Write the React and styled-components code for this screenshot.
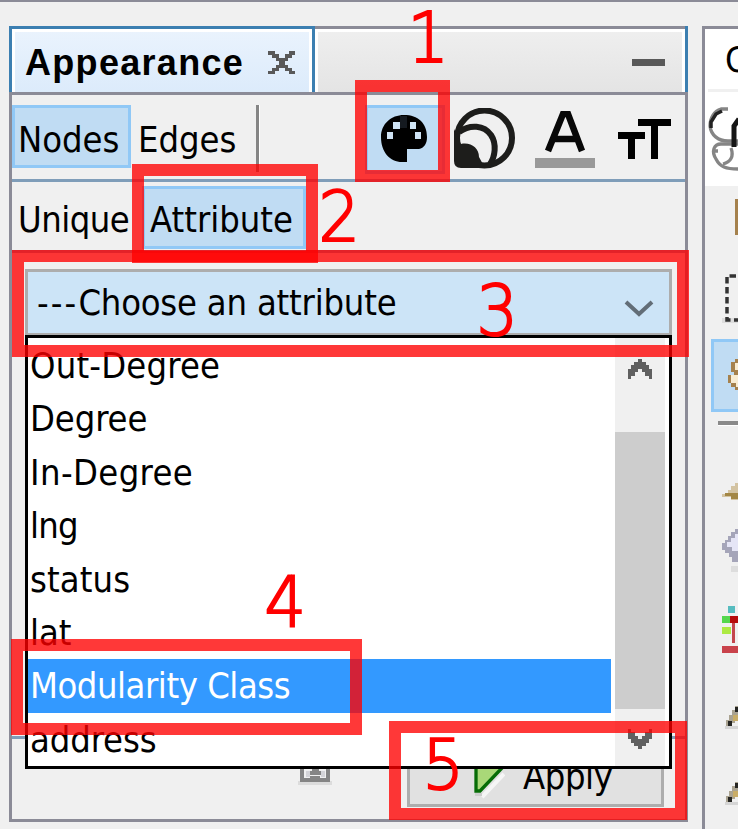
import React from 'react';
import styled, { createGlobalStyle, css } from 'styled-components';

const GlobalStyle = createGlobalStyle`
  html, body { margin: 0; padding: 0; overflow: hidden; background: #f0f0f0; }
  *, *::before, *::after { box-sizing: border-box; }
  svg { display: block; flex: none; }
`;

const Window = styled.div`
  position: relative;
  display: flex;
  gap: 14px;
  width: 738px;
  height: 829px;
  padding: 24px 0 0 9px;
  overflow: hidden;
  border-top: 2px solid #8b8b97;
  background: #f0f0f0;
  color: #000;
  font-family: 'DejaVu Sans Condensed', 'DejaVu Sans', sans-serif;
  font-stretch: condensed;
  font-size: 36px;
  line-height: 44px;
  white-space: nowrap;
`;

const Panel = styled.section`
  position: relative;
  flex: none;
  display: flex;
  flex-direction: column;
  width: 679px;
  height: 796px;
`;

const TitleBar = styled.header`
  display: flex;
  height: 66px;
  border-right: 3px solid #3c7fb1;
`;

const Tab = styled.div`
  display: flex;
  align-items: center;
  width: 306px;
  border: 3px solid #3c7fb1;
  border-bottom: 0;
  padding: 5px 0 0 13px;
  background: linear-gradient(#eaf3fd, #dcebfb);
  box-shadow: inset 3px 3px #fff, inset -3px 0 #fff;
`;

const TabTitle = styled.span`
  width: 243px;
  font: bold 36px/44px 'Liberation Sans', Arial, sans-serif;
  letter-spacing: 1.3px;
`;

const TitleFill = styled.div`
  flex: 1;
  display: flex;
  justify-content: flex-end;
  border-top: 3px solid #8b8b97;
  padding: 30px 20px 0 0;
  background: linear-gradient(#efefef, #e4e4e4);
  box-shadow: inset 3px 3px #fff, inset -3px 0 #fff;
`;

const Minimize = styled.span`
  width: 33px;
  height: 7px;
  background: #595959;
`;

const Body = styled.div`
  flex: 1;
  display: flex;
  flex-direction: column;
  border: 3px solid #8b8b97;
`;

const Toolbar = styled.div`
  display: flex;
  flex: none;
  height: ${p => p.$height}px;
  padding-top: ${p => p.$top}px;
  border-bottom: 3px solid #7f9db9;
`;

const Toggle = styled.div`
  flex: none;
  width: ${p => p.$width}px;
  height: ${p => p.$height || 63}px;
  padding: ${p => p.$pad};
  letter-spacing: ${p => p.$spacing || 0}px;
  border: 3px solid transparent;
  ${p => p.$active && css`
    border-color: #90c8f6;
    background: #c0dcf3;
  `}
`;

const Divider = styled.span`
  width: 4px;
  height: 67px;
  margin-right: 105px;
  border-left: 3px solid #858585;
  border-right: 1px solid #fff;
`;

const IconSlot = styled.div`
  width: ${p => p.$width}px;
  padding-top: ${p => p.$top}px;
`;

const ComboArea = styled.div`
  flex: 1;
  padding: 16px 0 0 13px;
  border-bottom: 3px solid #7f9db9;
`;

const Combo = styled.div`
  display: flex;
  justify-content: space-between;
  width: 647px;
  height: 67px;
  padding: 9px 15px 0 9px;
  border: 3px solid #adadad;
  background: #cce4f7;
`;

const ComboText = styled.span`
  letter-spacing: -0.2px;
`;

const Dashes = styled.span`
  letter-spacing: 2.1px;
`;

const Footer = styled.div`
  display: flex;
  height: 80px;
  padding: 4px 21px 0 286px;
  justify-content: space-between;
`;

const ApplyButton = styled.div`
  display: flex;
  width: 257px;
  height: 64px;
  padding: 5px 0 0 64px;
  border: 3px solid #adadad;
  background: #e1e1e1;
`;

const ApplyLabel = styled.span`
  padding-top: 4px;
  margin-left: 18px;
  letter-spacing: -0.4px;
`;

const Popup = styled.div`
  position: absolute;
  left: 25px;
  top: 333px;
  display: flex;
  width: 647px;
  height: 434px;
  border: 3px solid #000;
  background: #fff;
`;

const Options = styled.div`
  width: 583px;
  margin-right: 4px;
  padding-top: 1px;
`;

const Option = styled.div`
  height: 53.4px;
  padding: 5px 0 0 2px;
  letter-spacing: ${p => p.$spacing}px;
  background: ${p => (p.$selected ? '#3399ff' : 'transparent')};
  color: ${p => (p.$selected ? '#fff' : '#000')};
`;

const Scrollbar = styled.div`
  display: flex;
  flex-direction: column;
  align-items: center;
  width: 50px;
  padding-top: 21px;
  background: #f0f0f0;
`;

const Thumb = styled.div`
  flex: none;
  width: 50px;
  height: 277px;
  margin: 53px 0 20px;
  background: #cdcdcd;
`;

const SidePanel = styled.aside`
  flex: none;
  width: 60px;
  height: 820px;
  border: 3px solid #8b8b97;
`;

const SideTop = styled.div`
  height: 157px;
  background: #fff;
`;

const SideTitle = styled.div`
  height: 63px;
  padding: 9px 0 0 17px;
  margin-left: 3px;
  border-bottom: 3px solid #f0f0f0;
`;

const SideTool = styled.div`
  height: ${p => p.$height}px;
  padding: ${p => p.$pad};
`;

const ActiveTool = styled.div`
  height: 73px;
  margin-left: 6px;
  padding: 17px 0 0 14px;
  border: 3px solid #90c8f6;
  background: #c0dcf3;
`;

const SideLine = styled.div`
  height: 5px;
  margin: 9px 0 0 13px;
  border-top: 4px solid #8a8a8a;
  border-bottom: 1px solid #fff;
`;

const Callout = styled.div`
  position: absolute;
  left: ${p => p.$x}px;
  top: ${p => p.$y - 2}px;
  width: ${p => p.$w}px;
  height: ${p => p.$h}px;
  border: 12.5px solid rgba(255, 0, 0, 0.78);
`;

const Step = styled.span`
  position: absolute;
  left: ${p => p.$x}px;
  top: ${p => p.$y - 2}px;
  width: 40px;
  color: #f00;
  font: 200 70px/70px 'DejaVu Sans Light', 'DejaVu Sans', sans-serif;
  text-align: center;
  transform: scaleX(0.93);
  -webkit-text-stroke: 2.2px #f00;
  stroke-linejoin: round;
`;

const CloseIcon = () => (
  <svg width="28" height="24" viewBox="0 0 28 24">
    <path d="M0 0h7v3h4v4h6V3h4V0h6v4h-3v3h-4v3h-3v4h3v3h4v3h3v3h-6v-3h-4v-3h-6v3H7v3H0v-3h4v-3h4v-3h3v-4H8V7H4V4H0z" fill="#595959" />
  </svg>
);

const PaletteIcon = () => (
  <svg width="48" height="47" viewBox="0 0 48 47">
    <path d="M24 0C11 0 1 9 1 22c0 15 9 25 21 25h5V34h12c5-1 8-5 8-12C47 8 38 0 24 0Z" fill="#000" />
    <path d="M13 7h7v7h-7zM30 7h6v7h-6zM7 17h6v7H7zM35 17h6v7h-6z" fill="#cfe3f4" />
    <path d="M20 1h7v12h-7z" fill="#151a20" />
  </svg>
);

const RankingIcon = () => (
  <svg width="61" height="61" viewBox="0 0 61 61">
    <circle cx="30.5" cy="30" r="27.5" fill="none" stroke="#1d1d1b" strokeWidth="6" />
    <path d="M5 24C16 16 30 17 37 27c6 9 4 22-1 29" fill="none" stroke="#1d1d1b" strokeWidth="6" />
    <path d="M0 21l7 15c10-2 18 4 18 13l6 11H7q-7 0-7-7z" fill="#1d1d1b" />
  </svg>
);

const LabelColorIcon = () => (
  <svg width="60" height="58" viewBox="0 0 60 58">
    <path d="M13 40 28 3h5l14 37M18 28h24" fill="none" stroke="#080808" strokeWidth="6.5" />
    <path d="M0 47h60v10H0z" fill="#999" />
  </svg>
);

const LabelSizeIcon = () => (
  <svg width="54" height="40" viewBox="0 0 54 40">
    <path d="M20 0h33v7H40v33h-7V7H20zM0 13h27v7H17v20h-7V20H0z" fill="#000" />
  </svg>
);

const ScrollArrow = ({ down }) => (
  <svg width="24" height="20" viewBox="0 0 24 20">
    <path
      transform={down ? 'matrix(1 0 0 -1 0 20)' : undefined}
      d="M10 0h4v3h4v3h3v4h3v10h-3v-3h-4v-4h-3v-3h-4v3H7v4H3v3H0V10h3V6h3V3h4z"
      fill="#606060"
    />
  </svg>
);

const ComboArrow = () => (
  <svg width="30" height="20" viewBox="0 0 30 20">
    <path d="m2 2 13 12L28 2" fill="none" stroke="#626d77" strokeWidth="4" />
  </svg>
);

const LinkIcon = () => (
  <svg width="34" height="44" viewBox="0 0 34 44">
    <path d="M0 38h34v4H0z" fill="#dcdcdc" />
    <path d="M4 24v13h26V24M10 30h14" fill="none" stroke="#858585" strokeWidth="4" />
    <path d="M12 33h10v6H12zM14 25h7v4h-7z" fill="#858585" />
    <path d="M8 28h4v6H8zm15 0h4v6h-4z" fill="#d4d4d8" />
  </svg>
);

const PlayIcon = () => (
  <svg width="31" height="50" viewBox="0 0 31 50">
    <path d="M8 46 30 23" fill="none" stroke="#f6f6f6" strokeWidth="4" />
    <path d="M2 0v40h4l21-22L8 0z" fill="#a9d878" stroke="#066c06" strokeWidth="3.3" />
    <path d="M1 42h7v3H1z" fill="#ccc" />
  </svg>
);

const ScriptIcon = () => (
  <svg width="32" height="66" viewBox="0 0 32 66">
    <path d="M21 3h-7C7 5 3 12 3 20c1 9 8 15 18 15h11" fill="none" stroke="#858585" strokeWidth="3.3" />
    <path d="M15 5 9 8 4 16v6" fill="none" stroke="#222" strokeWidth="3.5" />
    <path d="M31 38H14c-7 0-10 7-5 15 4 8 10 10 22 10M6 45h5M24 42c3 8 0 14-8 16" fill="none" stroke="#858585" strokeWidth="3.3" />
    <path d="M32 13 27 20v21" fill="none" stroke="#161616" strokeWidth="5" />
  </svg>
);

const SelectionIcon = () => (
  <svg width="24" height="51" viewBox="0 0 24 51">
    <path d="M0 44h24v5H0z" fill="#ddd" />
    <path d="M24 2H5v44h19" fill="none" stroke="#333" strokeWidth="3.5" strokeDasharray="6.5 3.5" />
  </svg>
);

const HandIcon = () => (
  <svg width="12" height="32" viewBox="0 0 12 32">
    <path d="M12 0H7v3H3v10h3v3H0v8h3v4h4v3h5z" fill="#a5814d" />
    <path d="M12 4H7v7h5zM3 16h9v12H8v-4H3z" fill="#f8ecd2" />
  </svg>
);

const BrushIcon = () => (
  <svg width="16" height="18" viewBox="0 0 16 18">
    <path d="M16 0h-3v3H9v4H6v4H0v3h9v3h7z" fill="#d3c3a2" />
    <path d="M3 10h13v6H9v-3H3z" fill="#a38745" />
  </svg>
);

const DiamondIcon = () => (
  <svg width="16" height="44" viewBox="0 0 16 44">
    <path d="M16 0h-3v3H9v4H6v4H3v3H0v7h3v3h4v4h3v5h6z" fill="#a5a5b9" />
    <path d="M16 5h-3v4H9v4H5v5h5v4h6z" fill="#e5e5f6" />
    <path d="M9 37h7v6H9z" fill="#ddd" />
  </svg>
);

const GraphIcon = () => (
  <svg width="16" height="50" viewBox="0 0 16 50">
    <path d="M6 1h7v7H6z" fill="#57bcbf" />
    <path d="M0 11h9v7H0z" fill="#54d74d" />
    <path d="M0 22h9v7H0z" fill="#adea43" />
    <path d="M8 11h8v7H8z" fill="#b60b0b" />
    <path d="M10 18h3v20h-3z" fill="#c4464d" />
    <path d="M0 41h16v7H0z" fill="#c9424b" />
  </svg>
);

const PencilIcon = () => (
  <svg width="13" height="23" viewBox="0 0 13 23">
    <path d="M0 20h13v3H0z" fill="#d5d5d5" />
    <path d="M13 0h-3v4H7v5H4v5H1v6h6v-3h3v-3h3z" fill="#aaa391" />
    <path d="M8 9h5v6H8z" fill="#c9ad67" />
    <path d="M10 1h3v5h-3zM3 15h4v5H3z" fill="#252522" />
  </svg>
);

const options = [
  ['Out-Degree', 0.2],
  ['Degree', -0.1],
  ['In-Degree', 0.4],
  ['lng', -0.8],
  ['status', 0.1],
  ['lat', 0],
  ['Modularity Class', -0.45],
  ['address', -0.1],
];

const callouts = [
  [354.5, 80, 95.5, 102],
  [132, 164, 186, 99],
  [11.5, 250, 677.5, 106.5],
  [11, 638.5, 351, 96.5],
  [389, 721, 298, 99],
];

const steps = [
  ['1', 406, 3],
  ['2', 317, 182],
  ['3', 475, 276],
  ['4', 263, 567],
  ['5', 421, 730],
];

export default function App() {
  return (
    <>
      <GlobalStyle />
      <Window>
        <Panel>
          <TitleBar>
            <Tab>
              <TabTitle>Appearance</TabTitle>
              <CloseIcon />
            </Tab>
            <TitleFill><Minimize /></TitleFill>
          </TitleBar>
          <Body>
            <Toolbar $height={87} $top={10}>
              <Toggle $width={119} $active $pad="10px 0 0 3px">Nodes</Toggle>
              <Toggle $width={125} $pad="10px 0 0 4px">Edges</Toggle>
              <Divider />
              <IconSlot $width={89} $top={0}>
                <Toggle $width={80} $height={69} $active $pad="7px 0 0 12px"><PaletteIcon /></Toggle>
              </IconSlot>
              <IconSlot $width={81} $top={3}><RankingIcon /></IconSlot>
              <IconSlot $width={83} $top={6}><LabelColorIcon /></IconSlot>
              <IconSlot $width={54} $top={14}><LabelSizeIcon /></IconSlot>
            </Toolbar>
            <Toolbar $height={71} $top={4}>
              <Toggle $width={130} $spacing={-0.5} $pad="9px 0 0 3px">Unique</Toggle>
              <Toggle $width={164} $active $pad="9px 0 0 5px">Attribute</Toggle>
            </Toolbar>
            <ComboArea>
              <Combo>
                <ComboText><Dashes>---</Dashes>Choose an attribute</ComboText>
                <IconSlot $width={30} $top={19}><ComboArrow /></IconSlot>
              </Combo>
            </ComboArea>
            <Footer>
              <LinkIcon />
              <ApplyButton>
                <PlayIcon />
                <ApplyLabel>Apply</ApplyLabel>
              </ApplyButton>
            </Footer>
          </Body>
        </Panel>
        <SidePanel>
          <SideTop>
            <SideTitle>C</SideTitle>
            <SideTool $height={80} $pad="14px 0 0 2px"><ScriptIcon /></SideTool>
          </SideTop>
          <SideTool $height={88} $pad="13px 0 0 30px">
            <svg width="20" height="36"><path d="M0 0h20v36H0z" fill="#a5814d" /></svg>
          </SideTool>
          <SideTool $height={65} $pad="0 0 0 17px"><SelectionIcon /></SideTool>
          <ActiveTool><HandIcon /></ActiveTool>
          <SideLine />
          <SideTool $height={75} $pad="57px 0 0 17px"><BrushIcon /></SideTool>
          <SideTool $height={72} $pad="28px 0 0 17px"><DiamondIcon /></SideTool>
          <SideTool $height={82} $pad="32px 0 0 17px"><GraphIcon /></SideTool>
          <SideTool $height={76} $pad="51px 0 0 20px"><PencilIcon /></SideTool>
          <SideTool $height={76} $pad="51px 0 0 20px"><PencilIcon /></SideTool>
        </SidePanel>
        <Popup>
          <Options>
            {options.map(([name, spacing]) => (
              <Option key={name} $spacing={spacing} $selected={name === 'Modularity Class'}>{name}</Option>
            ))}
          </Options>
          <Scrollbar>
            <ScrollArrow />
            <Thumb />
            <ScrollArrow down />
          </Scrollbar>
        </Popup>
        {callouts.map(([x, y, w, h]) => <Callout key={y} $x={x} $y={y} $w={w} $h={h} />)}
        {steps.map(([n, x, y]) => <Step key={n} $x={x} $y={y}>{n}</Step>)}
      </Window>
    </>
  );
}
